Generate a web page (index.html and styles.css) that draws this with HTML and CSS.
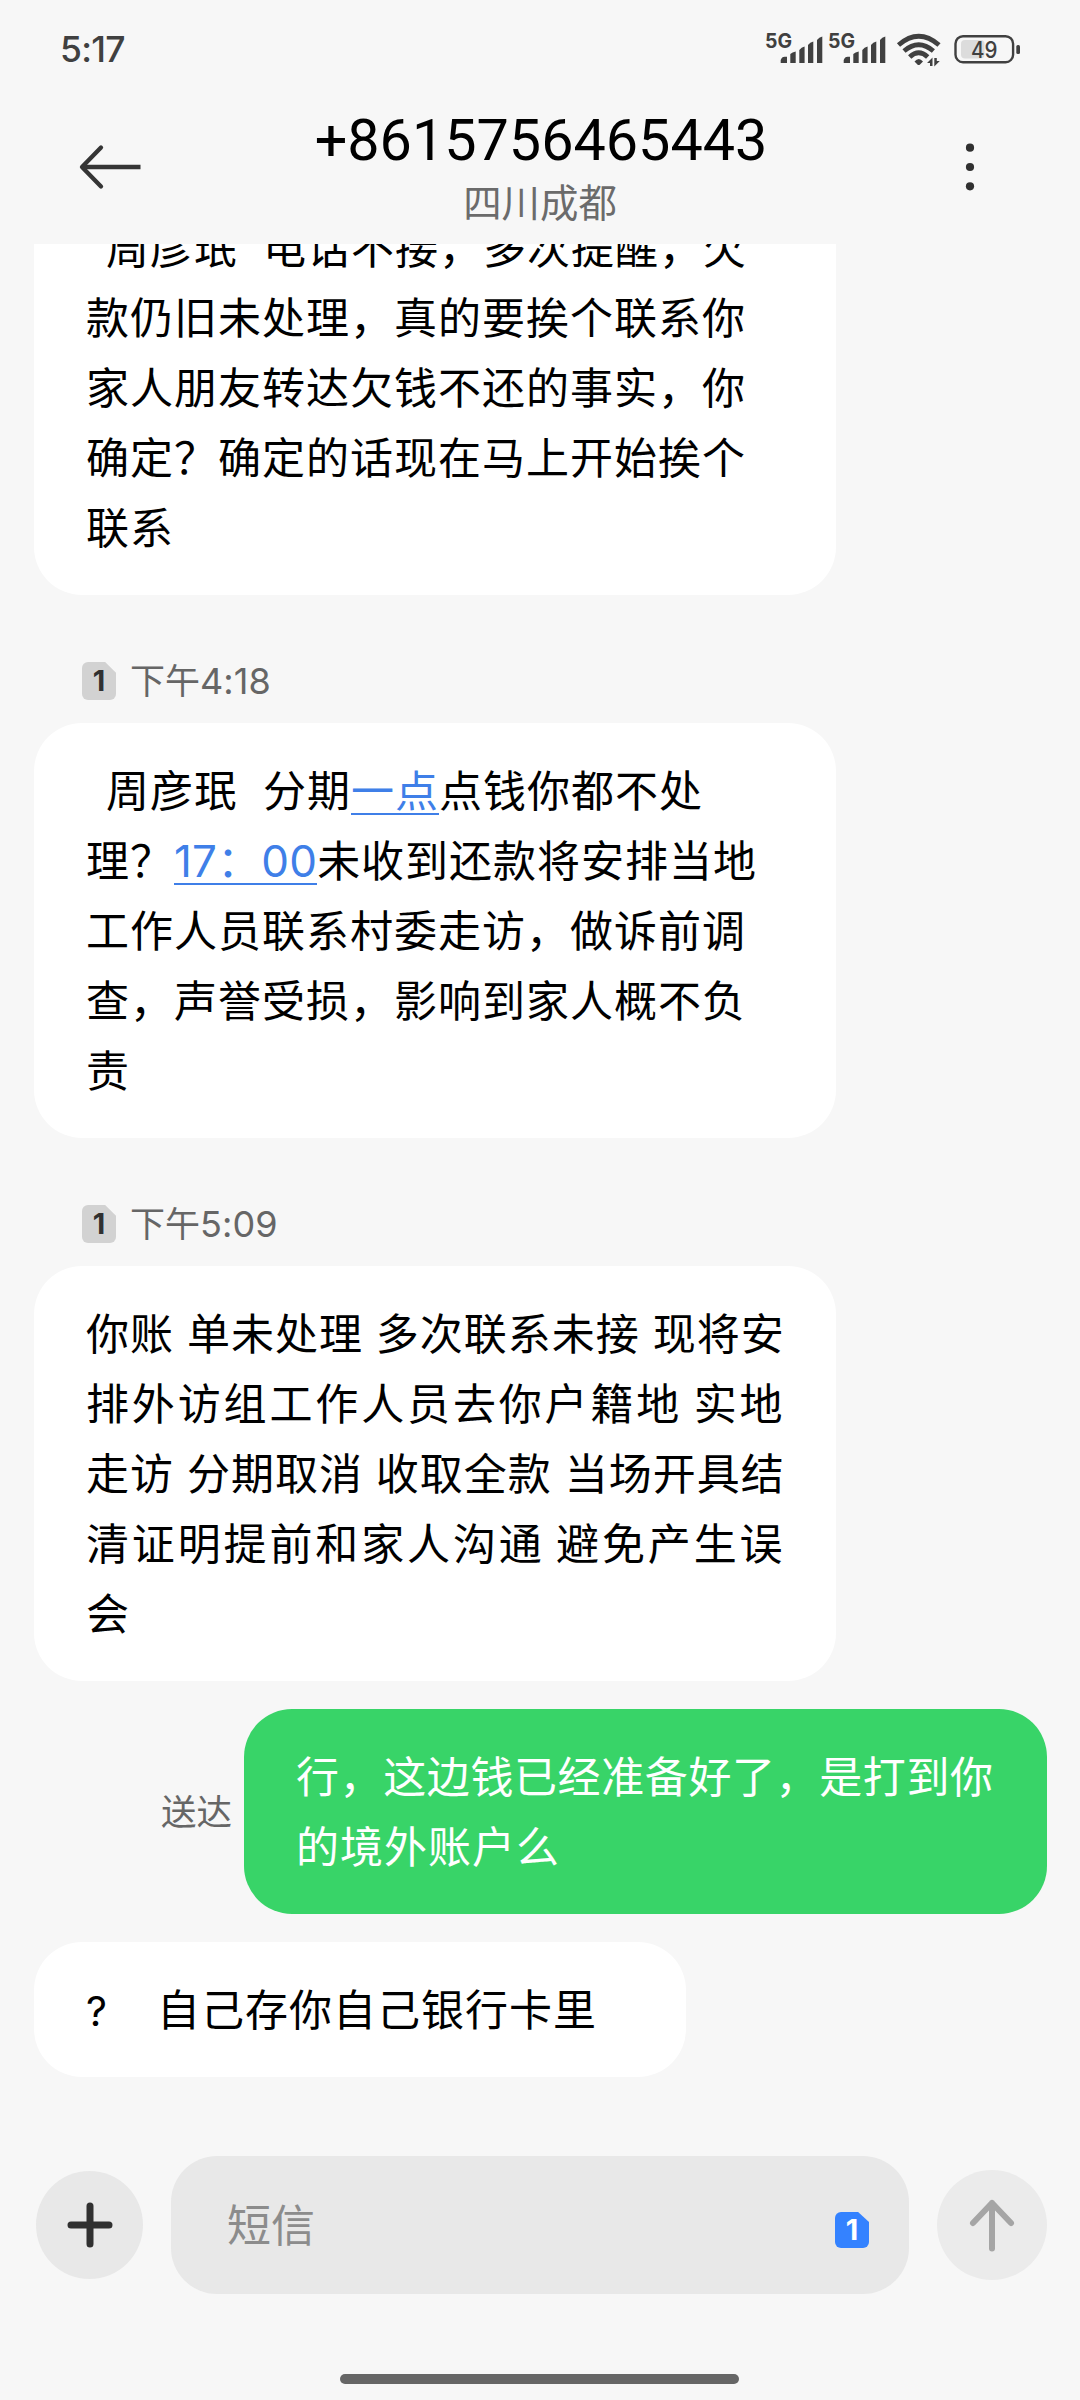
FILE: index.html
```html
<!DOCTYPE html>
<html lang="zh-CN">
<head>
<meta charset="utf-8">
<title>短信</title>
<link rel="stylesheet" href="styles.css">
</head>
<body>
<div class="screen">
  <div class="statusbar">
    <span class="clock">5:17</span>
    <svg class="status-icons" width="260" height="40" viewBox="764 30 260 40" fill="#404040">
      <text class="net" x="765" y="47.6" textLength="27" lengthAdjust="spacingAndGlyphs">5G</text>
      <path d="M780.7 63v-3q1-3.200 4-3.300h2.300V63zM790.300 63v-9q2-2 5.400-2.500V63zM799.300 63V50q2-2.600 5.300-3.500V63zM808 63V45q2-2.600 5.300-3.500V63zM817 63V40q2-2.600 5.300-3.500V63z"/>
      <text class="net" x="828" y="47.6" textLength="27" lengthAdjust="spacingAndGlyphs">5G</text>
      <path transform="translate(63 0)" d="M780.7 63v-3q1-3.200 4-3.300h2.300V63zM790.300 63v-9q2-2 5.400-2.500V63zM799.300 63V50q2-2.600 5.300-3.500V63zM808 63V45q2-2.600 5.300-3.500V63zM817 63V40q2-2.600 5.300-3.500V63z"/>
      <g fill="none" stroke="#404040" stroke-width="4.800">
        <path d="M898.500 45Q918.700 27.500 939 45"/>
        <path d="M904 51Q918.700 38.500 933.400 51"/>
        <path d="M909.700 57Q918.700 48.500 927.700 57"/>
      </g>
      <path d="M914.500 61.500Q918.700 56.500 923 61.500L920 64.500Q918.700 65.500 917.400 64.500z"/>
      <path d="M932.500 57.500v8.500h-2.500v-3h-3zM934.300 66.500v-8.500h2.500v3h3z"/>
      <rect x="961" y="40" width="23.500" height="18.500" rx="4" fill="#dcdcdc"/>
      <rect x="955.500" y="36.200" width="57.600" height="26" rx="7.500" fill="none" stroke="#404040" stroke-width="2.400"/>
      <rect x="1016.300" y="45" width="3.700" height="9" rx="1.500"/>
      <text class="level" x="971" y="58" textLength="26.500" lengthAdjust="spacingAndGlyphs">49</text>
    </svg>
  </div>

  <header class="header">
    <svg class="back" width="66" height="50" viewBox="78 142 66 50" fill="none" stroke="#353535" stroke-width="4.300" stroke-linecap="round" stroke-linejoin="round">
      <path d="M101 147.500 82 167 101 186.500"/><path stroke-linecap="butt" d="M82 167h58.500"/>
    </svg>
    <div class="titles">
      <h1 class="number">+8615756465443</h1>
      <div class="region">四川成都</div>
    </div>
    <svg class="more" width="16" height="50" viewBox="962 142 16 50" fill="#303030">
      <circle cx="970" cy="147.700" r="4.100"/><circle cx="970" cy="167" r="4.100"/><circle cx="970" cy="186.300" r="4.100"/>
    </svg>
  </header>

  <main class="thread">
    <div class="bubble">
      <p><span class="lead">  </span>周彦珉<span class="gap">  </span>电话不接，多次提醒，欠</p>
      <p>款仍旧未处理，真的要挨个联系你</p>
      <p>家人朋友转达欠钱不还的事实，你</p>
      <p>确定？确定的话现在马上开始挨个</p>
      <p>联系</p>
    </div>

    <div class="stamp"><span class="sim"><i>1</i></span><span class="time">下午<span class="digits">4:18</span></span></div>
    <div class="bubble">
      <p><span class="lead">  </span>周彦珉<span class="gap">  </span>分期<a class="link">一点</a>点钱你都不处</p>
      <p>理？<a class="link"><span class="num">17</span>：<span class="num">00</span></a>未收到还款将安排当地</p>
      <p>工作人员联系村委走访，做诉前调</p>
      <p>查，声誉受损，影响到家人概不负</p>
      <p>责</p>
    </div>

    <div class="stamp"><span class="sim"><i>1</i></span><span class="time">下午<span class="digits">5:09</span></span></div>
    <div class="bubble">
      <p class="loose">你账 单未处理 多次联系未接 现将安</p>
      <p class="spread">排外访组工作人员去你户籍地 实地</p>
      <p class="loose">走访 分期取消 收取全款 当场开具结</p>
      <p class="spread">清证明提前和家人沟通 避免产生误</p>
      <p>会</p>
    </div>

    <div class="sent">
      <span class="state">送达</span>
      <div class="bubble green">
        <p class="tight">行，这边钱已经准备好了，是打到你</p>
        <p>的境外账户么</p>
      </div>
    </div>

    <div class="bubble short">
      <p><span class="mark">?</span>自己存你自己银行卡里</p>
    </div>
  </main>

  <footer class="composer">
    <div class="round add">
      <svg width="50" height="50" viewBox="-25 -25 50 50" stroke="#303030" stroke-width="7" stroke-linecap="round"><path d="M-19 0H19M0-19V19"/></svg>
    </div>
    <div class="field">
      <span class="hint">短信</span>
      <span class="sim blue"><i>1</i></span>
    </div>
    <div class="round send">
      <svg width="60" height="60" viewBox="-30 -30 60 60" fill="none" stroke="#a5a5a5" stroke-width="6" stroke-linecap="round" stroke-linejoin="round"><path d="M-19-2 0-22 19-2M0-22V23.500"/></svg>
    </div>
  </footer>
  <div class="home"></div>
</div>
</body>
</html>
```
FILE: styles.css
```css
* { box-sizing: border-box; }

body {
  margin: 0;
  background: #f7f7f7;
  color: #000;
  font-family: "Noto Sans CJK SC", sans-serif;
}

p, h1 { margin: 0; font-weight: 400; }
svg { display: block; }

.screen {
  width: 1080px;
  height: 2400px;
  display: flex;
  flex-direction: column;
  overflow: hidden;
}

.statusbar {
  height: 100px;
  padding: 30px 56px 0 60px;
  display: flex;
  justify-content: space-between;
  align-items: flex-start;
}

.clock {
  font: 500 35.500px/40px Inter, sans-serif;
  color: #404040;
  letter-spacing: -0.700px;
}

.net { font: 700 20px Inter, sans-serif; }
.level { font: 500 22.500px Inter, sans-serif; }

.header {
  height: 144px;
  padding: 0 102px 0 78px;
  display: grid;
  grid-template-columns: 66px 1fr 16px;
}

.back, .more { margin-top: 42px; }

.titles { text-align: center; }

.number {
  margin: 9px -20px 0 -44px;
  font: 450 57.500px/64px Roboto, sans-serif;
  white-space: nowrap;
}

.region {
  margin: 2px -20px 0 -46px;
  font-size: 38.400px;
  line-height: 50px;
  color: #6b6b6b;
}

.thread {
  height: 1892px;
  padding: 0 33px 59px 34px;
  display: flex;
  flex-direction: column;
  justify-content: flex-end;
  align-items: flex-start;
  overflow: hidden;
}

.bubble {
  flex: none;
  width: 802px;
  padding: 30px 52px 35px;
  background: #fff;
  border-radius: 48px;
  font-size: 43px;
  letter-spacing: 1px;
  line-height: 70px;
}

.bubble p { height: 70px; white-space: pre; }
.lead { display: inline-block; width: 20px; overflow: hidden; }
.gap { display: inline-block; width: 25px; overflow: hidden; }
.lead, .gap { height: 70px; vertical-align: top; }
.bubble .loose { word-spacing: 2.300px; }
.bubble .spread { letter-spacing: 2.860px; word-spacing: -1px; }
.bubble .tight { letter-spacing: 0.600px; }

.link {
  display: inline-block;
  height: 62px;
  line-height: 70px;
  border-bottom: 2px solid #3f7fe8;
  color: #3f7fe8;
  vertical-align: top;
}

.num { font-family: Inter, sans-serif; font-size: 44px; letter-spacing: 0.200px; }

.stamp {
  flex: none;
  height: 128px;
  padding: 60px 0 16px 48px;
  display: flex;
  align-items: center;
  gap: 14px;
  color: #666;
  font-size: 35px;
  line-height: 52px;
}

.time { margin-bottom: 3px; }
.digits { font-family: Inter, sans-serif; font-size: 36px; letter-spacing: 0.100px; }

.sim {
  width: 34px;
  height: 38px;
  background: #d2d2d2;
  border-radius: 6px;
  clip-path: polygon(0 0, 68% 0, 100% 28%, 100% 100%, 0 100%);
  color: #303030;
  text-align: center;
}

.sim i { display: block; font: 700 29px/38px Inter, sans-serif; }

.sent {
  flex: none;
  align-self: flex-end;
  margin: 28px 0;
  display: flex;
  align-items: center;
  gap: 12px;
}

.state { font-size: 35.500px; line-height: 52px; color: #666; margin-bottom: 4px; }
.green { width: 803px; background: #38d468; color: #fff; }
.short { width: 652px; }
.mark { display: inline-block; width: 71px; font-family: Inter, sans-serif; font-size: 41px; }

.composer {
  height: 180px;
  padding: 20px 33px 22px 36px;
  display: flex;
  align-items: center;
}

.round {
  border-radius: 50%;
  display: flex;
  align-items: center;
  justify-content: center;
}

.add { width: 107px; height: 108px; background: #e8e8e8; }
.send { width: 110px; height: 110px; background: #ebebeb; }

.field {
  width: 738px;
  height: 138px;
  margin: 0 28px;
  padding: 0 40px 0 56px;
  border-radius: 46px;
  background: #e8e8e8;
  color: #8c8c8c;
  display: flex;
  align-items: center;
  justify-content: space-between;
  font-size: 44px;
  line-height: 70px;
}

.hint { margin-bottom: 5px; }
.blue { height: 36px; background: #3482ff; color: #fff; margin-top: 10px; }
.blue i { line-height: 36px; }

.home {
  width: 399px;
  height: 10px;
  margin: 58px 0 0 340px;
  border-radius: 5px;
  background: #666;
}
```
